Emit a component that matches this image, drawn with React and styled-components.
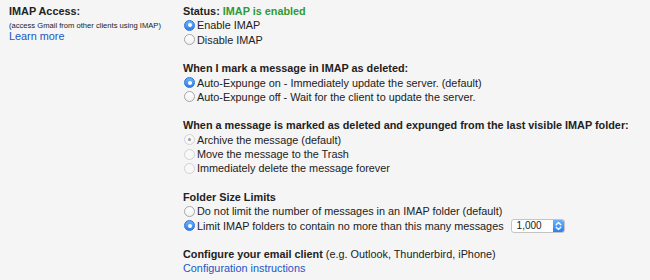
import React from "react"
import styled, { createGlobalStyle, css } from "styled-components"

const GlobalStyle = createGlobalStyle`
    html, body {
        margin: 0;
        padding: 0;
        background: #f5f5f5;
    }
    body {
        font-family: "Liberation Sans", Arial, Helvetica, sans-serif;
        font-size: 10.85px;
        color: #222;
    }
`

const Page = styled.div`
    display: flex;
    padding: 4px 0 0 9px;
    width: 650px;
    height: 280px;
    box-sizing: border-box;
`

const Side = styled.div`
    width: 174px;
    flex: none;
    display: flex;
    flex-direction: column;
`

const SideTitle = styled.div`
    font-weight: bold;
    line-height: 14.3px;
`

const SideNote = styled.div`
    font-size: 7.6px;
    line-height: 11px;
    margin-top: 1.5px;
    color: #222;
`

const Link = styled.a`
    color: #2255c4;
    text-decoration: none;
    cursor: pointer;
    line-height: ${props => props.$lh || "11px"};
`

const Main = styled.div`
    display: flex;
    flex-direction: column;
    gap: 14.3px;
`

const Section = styled.div`
    display: flex;
    flex-direction: column;
`

const Heading = styled.div`
    font-weight: bold;
    line-height: 14.3px;

    & > span {
        font-weight: normal;
    }
`

const Enabled = styled.b`
    color: #2f9a36;
`

const Option = styled.label`
    display: flex;
    align-items: center;
    gap: 2px;
    height: 14.3px;
    margin-left: 1px;
    cursor: pointer;
`

const Radio = styled.span`
    width: 11px;
    height: 11px;
    box-sizing: border-box;
    border-radius: 50%;
    flex: none;
    position: relative;
    border: 1px solid #a6a6a6;
    background: linear-gradient(#ffffff, #f1f1f1);

    ${props => props.$checked && css`
        border-color: #2b6fd6;
        background: linear-gradient(#6bb2fa, #2d80f0);
        &::after {
            content: "";
            position: absolute;
            left: 50%;
            top: 50%;
            width: 4px;
            height: 4px;
            margin: -2px 0 0 -2px;
            border-radius: 50%;
            background: #fff;
        }
    `}

    ${props => props.$disabled && css`
        border-color: #d2d2d2;
        background: #f8f8f8;
    `}

    ${props => props.$disabled && props.$checked && css`
        &::after {
            width: 3px;
            height: 3px;
            margin: -1.5px 0 0 -1.5px;
            background: #9c9c9c;
        }
    `}
`

const Select = styled.span`
    display: inline-flex;
    align-items: stretch;
    margin-left: 5px;
    width: 54px;
    height: 14px;
    box-sizing: border-box;
    border: 1px solid #c4c4c4;
    border-radius: 3px;
    background: #fff;
    overflow: hidden;
`

const SelectValue = styled.span`
    flex: 1;
    padding-left: 5px;
    font-size: 10px;
    line-height: 12px;
`

const SelectArrows = styled.span`
    width: 11px;
    background: linear-gradient(#6cb3fb, #2c7ef0);
    display: flex;
    align-items: center;
    justify-content: center;
`

const Opt = ({ checked, disabled, children }) => (
    <Option>
        <Radio $checked={checked} $disabled={disabled} />
        {children}
    </Option>
)

const App = () => {
    return (
        <>
            <GlobalStyle />
            <Page>
                <Side>
                    <SideTitle>IMAP Access:</SideTitle>
                    <SideNote>(access Gmail from other clients using IMAP)</SideNote>
                    <Link>Learn more</Link>
                </Side>
                <Main>
                    <Section>
                        <Heading>Status: <Enabled>IMAP is enabled</Enabled></Heading>
                        <Opt checked>Enable IMAP</Opt>
                        <Opt>Disable IMAP</Opt>
                    </Section>
                    <Section>
                        <Heading>When I mark a message in IMAP as deleted:</Heading>
                        <Opt checked>Auto-Expunge on - Immediately update the server. (default)</Opt>
                        <Opt>Auto-Expunge off - Wait for the client to update the server.</Opt>
                    </Section>
                    <Section>
                        <Heading>When a message is marked as deleted and expunged from the last visible IMAP folder:</Heading>
                        <Opt checked disabled>Archive the message (default)</Opt>
                        <Opt disabled>Move the message to the Trash</Opt>
                        <Opt disabled>Immediately delete the message forever</Opt>
                    </Section>
                    <Section>
                        <Heading>Folder Size Limits</Heading>
                        <Opt>Do not limit the number of messages in an IMAP folder (default)</Opt>
                        <Opt checked>
                            Limit IMAP folders to contain no more than this many messages
                            <Select>
                                <SelectValue>1,000</SelectValue>
                                <SelectArrows>
                                    <svg width="7" height="10" viewBox="0 0 7 10" fill="none" stroke="#fff" strokeWidth="1.3" strokeLinecap="round" strokeLinejoin="round">
                                        <path d="M1.2 3.8 L3.5 1.5 L5.8 3.8" />
                                        <path d="M1.2 6.2 L3.5 8.5 L5.8 6.2" />
                                    </svg>
                                </SelectArrows>
                            </Select>
                        </Opt>
                    </Section>
                    <Section>
                        <Heading>Configure your email client <span>(e.g. Outlook, Thunderbird, iPhone)</span></Heading>
                        <Link $lh="14.3px">Configuration instructions</Link>
                    </Section>
                </Main>
            </Page>
        </>
    )
}

export default App
